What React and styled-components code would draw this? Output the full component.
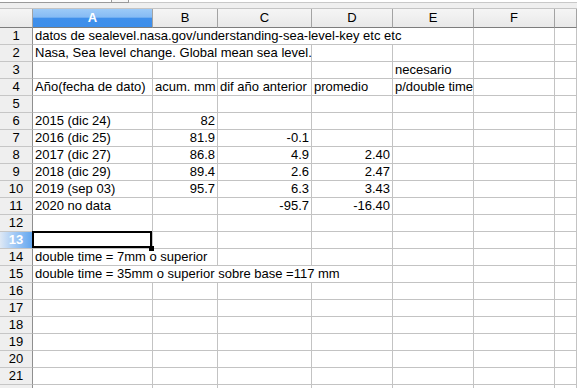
import React from 'react';
import styled, { createGlobalStyle } from 'styled-components';

const GlobalStyle = createGlobalStyle`
  html, body {
    margin: 0;
    padding: 0;
    background: #fff;
    overflow: hidden;
  }
  body {
    font-family: "Liberation Sans", Arial, sans-serif;
    font-size: 13px;
    color: #000;
  }
`

const Window = styled.div`
  width: 577px;
  height: 388px;
  overflow: hidden;
  display: flex;
  flex-direction: column;
`

const FormulaStrip = styled.div`
  height: 9px;
  flex: none;
  display: flex;
  align-items: flex-start;
  background: #efefef;
  border-bottom: 1px solid #c4c4c4;
  box-sizing: border-box;
`

const NameBox = styled.div`
  width: 112px;
  height: 3px;
  background: #fff;
  border-right: 1px solid #9a9a9a;
  border-bottom: 1px solid #9a9a9a;
  box-sizing: border-box;
`

const NameButton = styled.div`
  width: 17px;
  height: 3px;
  background: #f7f7f7;
  border-right: 1px solid #9a9a9a;
  border-bottom: 1px solid #9a9a9a;
  box-sizing: border-box;
`

const FormulaInput = styled.div`
  flex: 1;
  height: 3px;
  background: #fff;
  border-bottom: 1px solid #c8c8c8;
  box-sizing: border-box;
`

const Sheet = styled.div`
  display: grid;
  grid-template-columns: 33px 120px 65px 94px 81px 81px 81px 1fr;
  grid-auto-rows: 17px;
  grid-template-rows: 19px;
`

const ColHeader = styled.div`
  box-sizing: border-box;
  border-right: 1px solid #a3a3a3;
  border-bottom: 1px solid #7d7d7d;
  background: ${p => p.$active
    ? 'linear-gradient(#9ccaf8 0%, #86bbf4 45%, #3f8feb 52%, #3d8eea 100%)'
    : 'linear-gradient(#f5f5f5, #e9e9e9)'};
  color: ${p => p.$active ? '#fff' : '#000'};
  font-weight: ${p => p.$active ? 'bold' : 'normal'};
  display: flex;
  align-items: center;
  justify-content: center;
  line-height: 18px;
`

const RowHeader = styled.div`
  box-sizing: border-box;
  border-right: 1px solid #8f8f8f;
  border-bottom: 1px solid #c6c6c6;
  background: ${p => p.$active
    ? 'linear-gradient(to right, #dfe9f5 0%, #a9cdf6 40%, #62a6ef 100%)'
    : '#efefef'};
  color: ${p => p.$active ? '#fff' : '#000'};
  font-weight: ${p => p.$active ? 'bold' : 'normal'};
  display: flex;
  align-items: center;
  justify-content: center;
  line-height: 16px;
`

const Cell = styled.div`
  box-sizing: border-box;
  position: relative;
  grid-column: span ${p => p.$span || 1};
  border-right: 1px solid #c3c3c3;
  border-bottom: 1px solid #c3c3c3;
  padding: 0 2px 0 2px;
  line-height: 16px;
  white-space: nowrap;
  text-align: ${p => p.$num ? 'right' : 'left'};
  z-index: ${p => p.$selected ? 1 : 0};

  ${p => p.$selected && `
    &::before {
      content: '';
      position: absolute;
      left: -1px;
      top: -1px;
      right: 0;
      bottom: 0;
      border: 2px solid #000;
    }
    &::after {
      content: '';
      position: absolute;
      right: -2px;
      bottom: -3px;
      width: 5px;
      height: 5px;
      background: #000;
    }
  `}
`

const COLS = ['A', 'B', 'C', 'D', 'E', 'F', 'G'];

// cell contents keyed by row, then column index
const DATA = {
  1: { 0: { t: 'datos de sealevel.nasa.gov/understanding-sea-level-key etc etc', span: 5 } },
  2: { 0: { t: 'Nasa, Sea level change. Global mean sea level.', span: 3 } },
  3: { 4: { t: 'necesario' } },
  4: {
    0: { t: 'Año(fecha de dato)' },
    1: { t: 'acum. mm' },
    2: { t: 'dif año anterior' },
    3: { t: 'promedio' },
    4: { t: 'p/double time' },
  },
  6: { 0: { t: '2015 (dic 24)' }, 1: { t: '82', num: true } },
  7: { 0: { t: '2016 (dic 25)' }, 1: { t: '81.9', num: true }, 2: { t: '-0.1', num: true } },
  8: { 0: { t: '2017 (dic 27)' }, 1: { t: '86.8', num: true }, 2: { t: '4.9', num: true }, 3: { t: '2.40', num: true } },
  9: { 0: { t: '2018 (dic 29)' }, 1: { t: '89.4', num: true }, 2: { t: '2.6', num: true }, 3: { t: '2.47', num: true } },
  10: { 0: { t: '2019 (sep 03)' }, 1: { t: '95.7', num: true }, 2: { t: '6.3', num: true }, 3: { t: '3.43', num: true } },
  11: { 0: { t: '2020 no data' }, 2: { t: '-95.7', num: true }, 3: { t: '-16.40', num: true } },
  14: { 0: { t: 'double time = 7mm o superior', span: 2 } },
  15: { 0: { t: 'double time = 35mm o superior sobre base =117 mm', span: 4 } },
};

const SELECTED = { row: 13, col: 0 };
const VISIBLE_ROWS = 21;

const renderRow = (row) => {
  const cells = [];
  const content = DATA[row] || {};
  let c = 0;
  while (c < COLS.length) {
    const item = content[c];
    const span = item && item.span ? item.span : 1;
    cells.push(
      <Cell
        key={c}
        $span={span}
        $num={item && item.num}
        $selected={row === SELECTED.row && c === SELECTED.col}
      >
        {item ? item.t : ''}
      </Cell>
    );
    c += span;
  }
  return cells;
};

const App = () => {
  // one extra row peeks in under the bottom edge, its number out of sight
  const rows = Array.from({ length: VISIBLE_ROWS + 1 }, (_, i) => i + 1);

  return (
    <Window>
      <GlobalStyle />
      <FormulaStrip>
        <NameBox />
        <NameButton />
        <FormulaInput />
      </FormulaStrip>
      <Sheet>
        <ColHeader />
        {COLS.map((name, i) => (
          <ColHeader key={name} $active={i === SELECTED.col}>{name === 'G' ? '' : name}</ColHeader>
        ))}
        {rows.map(row => (
          <React.Fragment key={row}>
            <RowHeader $active={row === SELECTED.row}>
              {row <= VISIBLE_ROWS ? row : ''}
            </RowHeader>
            {renderRow(row)}
          </React.Fragment>
        ))}
      </Sheet>
    </Window>
  );
};

export default App;
